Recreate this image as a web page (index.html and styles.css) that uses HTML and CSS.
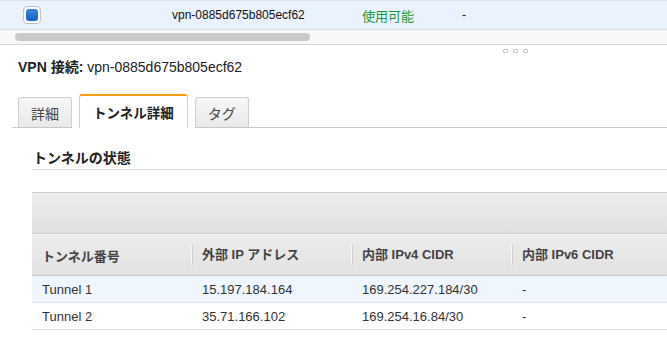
FILE: index.html
```html
<!DOCTYPE html>
<html lang="ja">
<head>
<meta charset="utf-8">
<link rel="stylesheet" href="styles.css">
</head>
<body>
<div class="page">
  <div class="toprow">
    <div class="cell-check"><span class="checkbox"><span class="checkbox-inner"></span></span></div>
    <div class="cell-id">vpn-0885d675b805ecf62</div>
    <div class="cell-state">使用可能</div>
    <div class="cell-dash">-</div>
  </div>
  <div class="hscroll"><div class="thumb"></div></div>
  <div class="grip"><span></span><span></span><span></span></div>
  <div class="title"><b>VPN 接続:</b> vpn-0885d675b805ecf62</div>
  <div class="tabs">
    <div class="tab">詳細</div>
    <div class="tab active">トンネル詳細</div>
    <div class="tab">タグ</div>
    <div class="tabfill"></div>
  </div>
  <div class="section">
    <h2 class="section-title">トンネルの状態</h2>
    <div class="table">
      <div class="toolbar"></div>
      <div class="row head">
        <div class="col">トンネル番号</div>
        <div class="col sep">外部 IP アドレス</div>
        <div class="col sep">内部 IPv4 CIDR</div>
        <div class="col sep">内部 IPv6 CIDR</div>
      </div>
      <div class="row odd">
        <div class="col">Tunnel 1</div>
        <div class="col">15.197.184.164</div>
        <div class="col">169.254.227.184/30</div>
        <div class="col">-</div>
      </div>
      <div class="row">
        <div class="col">Tunnel 2</div>
        <div class="col">35.71.166.102</div>
        <div class="col">169.254.16.84/30</div>
        <div class="col">-</div>
      </div>
    </div>
  </div>
</div>
</body>
</html>
```

FILE: styles.css
```css
* { box-sizing: border-box; }
html, body { margin: 0; padding: 0; background: #fff; }
body {
  width: 667px;
  height: 347px;
  overflow: hidden;
  font-family: "Liberation Sans", Arial, "Noto Sans CJK JP", sans-serif;
  color: #222;
}
.page { width: 667px; }

.toprow {
  display: flex;
  align-items: center;
  height: 30px;
  background: #eaf2fd;
  border-top: 1px solid #dde3ea;
  border-bottom: 1px solid #d8dde3;
  font-size: 12px;
}
.cell-check { width: 172px; padding-left: 23px; display: flex; align-items: center; }
.checkbox {
  width: 18px; height: 18px;
  border: 1px solid #c4c4c4;
  border-radius: 4px;
  background: #fff;
  display: flex; align-items: center; justify-content: center;
}
.checkbox-inner {
  width: 12px; height: 12px;
  border-radius: 3px;
  background: linear-gradient(#3a86e0, #1563c8);
}
.cell-id { width: 190px; color: #111; }
.cell-state { width: 100px; color: #1a9a3a; font-size: 13px; }
.cell-dash { color: #111; }

.hscroll {
  height: 15px;
  background: #f8f8f8;
  border-bottom: 1px solid #d4d4d4;
  padding: 3px 0 0 15px;
}
.thumb {
  width: 295px; height: 8px;
  border-radius: 4px;
  background: #cacaca;
}
.grip {
  display: flex; gap: 5px;
  padding-left: 503px;
  height: 10px;
  padding-top: 4px;
}
.grip span {
  width: 5px; height: 4px;
  border: 1px solid #c8c8c8;
  border-radius: 1px;
}

.title {
  padding-left: 18px;
  margin-top: 4px;
  font-size: 14px;
  line-height: 16px;
  color: #222;
}
.title b { font-weight: bold; }

.tabs {
  display: flex;
  align-items: flex-end;
  margin-top: 19px;
  padding-left: 12px;
}
.tabs::before {
  content: "";
  width: 6px;
  border-bottom: 1px solid #c8c8c8;
}
.tab {
  height: 31px;
  padding: 0 12px;
  margin-right: 7px;
  border: 1px solid #cfcfcf;
  border-bottom: 1px solid #c8c8c8;
  border-radius: 3px 3px 0 0;
  background: linear-gradient(#f7f7f7, #e9e9e9);
  font-size: 14px;
  color: #444;
  display: flex; align-items: center;
}
.tab.active {
  height: 34px;
  background: #fff;
  border: 1px solid #cfcfcf;
  border-top: 2px solid #f39c12;
  border-bottom-color: #fff;
  font-weight: bold;
  font-size: 13.5px;
  color: #222;
  padding: 0 13px;
}
.tabfill { flex: 1; border-bottom: 1px solid #c8c8c8; margin-left: -7px; }

.section { padding-left: 32px; }
.section-title {
  margin: 21px 0 0 0;
  font-size: 14px;
  font-weight: bold;
  color: #222;
  line-height: 18px;
  padding-left: 1px;
  padding-bottom: 2px;
  border-bottom: 1px solid #dcdcdc;
}
.table { margin-top: 22px; width: 660px; }
.toolbar {
  height: 42px;
  border-top: 1px solid #cbcbcb;
  background: linear-gradient(#ededed, #e0e0e0);
  border-bottom: 1px solid #cfcfcf;
}
.row {
  display: flex;
  height: 27px;
  align-items: center;
  border-bottom: 1px solid #dde0e4;
  font-size: 13px;
  color: #333;
}
.row.head {
  height: 42px;
  border-top: 1px solid #f4f4f4;
  background: linear-gradient(#ececec, #e2e2e2);
  border-bottom: 1px solid #c9c9c9;
  font-size: 13px;
  font-weight: bold;
  color: #444;
}
.row.odd { background: #f0f6fd; }
.col { width: 160px; padding-left: 10px; white-space: nowrap; }
.head .col.sep {
  border-left: 1px solid #cfcfcf;
  box-shadow: -1px 0 0 #f8f8f8;
  line-height: 20px;
  padding-left: 9px;
}
```
